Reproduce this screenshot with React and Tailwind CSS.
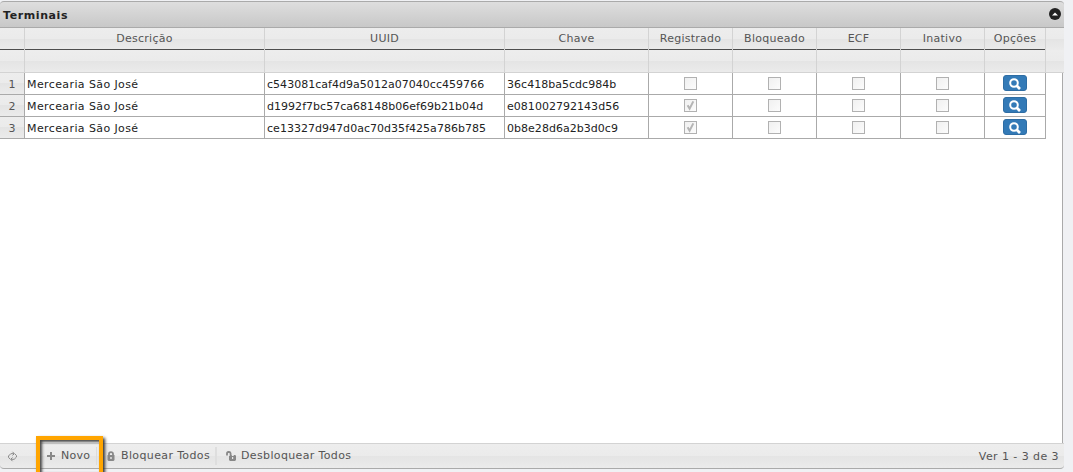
const columns = [
  { label: '', cls: 'w-[25px]' },
  { label: 'Descrição', cls: 'w-[240px]' },
  { label: 'UUID', cls: 'w-[240px]' },
  { label: 'Chave', cls: 'w-[144px]' },
  { label: 'Registrado', cls: 'w-[84px]' },
  { label: 'Bloqueado', cls: 'w-[84px]' },
  { label: 'ECF', cls: 'w-[84px]' },
  { label: 'Inativo', cls: 'w-[84px]' },
  { label: 'Opções', cls: 'w-[61px]' },
];

const rows = [
  { name: 'Mercearia São José', uuid: 'c543081caf4d9a5012a07040cc459766', key: '36c418ba5cdc984b', flags: [false, false, false, false] },
  { name: 'Mercearia São José', uuid: 'd1992f7bc57ca68148b06ef69b21b04d', key: 'e081002792143d56', flags: [true, false, false, false] },
  { name: 'Mercearia São José', uuid: 'ce13327d947d0ac70d35f425a786b785', key: '0b8e28d6a2b3d0c9', flags: [true, false, false, false] },
];

const shade = 'bg-[linear-gradient(#ededed_0%,#ebebeb_49%,#e4e4e4_50%,#ebebeb_100%)]';

function Check({ checked }) {
  return (
    <span className="flex size-[13px] items-center justify-center border border-[#b1b1b1] bg-[linear-gradient(135deg,#f0f0f0,#fcfcfc)]">
      {checked && (
        <svg width="11" height="11" viewBox="0 0 11 11" fill="none" stroke="#b4b4b4" strokeWidth="2">
          <path d="M2.600 5.200 4.600 8.700 8.300 1.400" />
        </svg>
      )}
    </span>
  );
}

function SearchButton() {
  return (
    <span className="mb-[1px] flex h-4 w-6 items-center justify-center rounded-[3px] border border-[#2e6da4] bg-[#337ab7]">
      <svg width="12" height="12" viewBox="0 0 12 12" fill="none" stroke="#fff" className="mt-[2px]">
        <circle cx="5" cy="5" r="3.8" strokeWidth="2" />
        <path d="m7.800 7.800 3.200 3.200" strokeWidth="2.700" />
      </svg>
    </span>
  );
}

function Lock({ open }) {
  return open ? (
    <svg width="12" height="10" viewBox="0 0 12 10" className="shrink-0">
      <path d="M1 4.500V2.600Q1 1 2.400 1h.8Q4.600 1 4.600 2.600V5" fill="none" stroke="#888" strokeWidth="1.800" />
      <path d="M3 5h1.300V4h1.400v1h2V4h1.600l.7 1v4l-1 1H4L3 9Z" fill="#888" />
      <path d="M6 6h1.200v2H6z" fill="#e8e8e8" />
    </svg>
  ) : (
    <svg width="8" height="10" viewBox="0 0 8 10" className="shrink-0">
      <path d="M2 5V3Q2 1.200 4 1.200T6 3v2" fill="none" stroke="#888" strokeWidth="1.800" />
      <path d="M.5 4h7v5l-1 1h-5l-1-1Z" fill="#888" />
      <path d="M3.300 6h1.400v2H3.300z" fill="#e8e8e8" />
    </svg>
  );
}

function Cell({ cls, className = '', children }) {
  return <div className={`flex shrink-0 items-center border-r border-[#aaa] ${cls} ${className}`}>{children}</div>;
}

export default function App() {
  return (
    <div className="flex h-[472px] w-[1073px] flex-col overflow-hidden bg-[#f0f1f4] pt-px font-['Verdana','DejaVu_Sans',sans-serif] text-[11px] leading-[14px] text-[#555]">
      <div className="flex h-[468px] w-[1064px] flex-col">
        <header className="flex h-[27px] shrink-0 items-center justify-between rounded-t-[4px] border-y border-[#aaa] bg-[linear-gradient(#dedede,#c8c8c8)] pr-[3px] pl-[3px] font-bold text-[#222]">
          <span className="pt-[2px] tracking-[0.6px]">Terminais</span>
          <svg width="12" height="12" viewBox="0 0 12 12" className="mb-px">
            <circle cx="6" cy="6" r="6" fill="#222" />
            <path d="m3 7.500 3-3 3 3Z" fill="#fff" />
          </svg>
        </header>

        <div className={`flex h-[22px] shrink-0 tracking-[0.25px] ${shade}`}>
          {columns.map((c, i) => (
            <div key={i} className={`flex shrink-0 flex-col border-r border-[#d3d3d3] ${c.cls}`}>
              <div className="flex h-[21px] items-center justify-center">{c.label}</div>
              <div className="h-px bg-[#4d4d4d]" />
            </div>
          ))}
        </div>
        <div className={`flex h-[23px] shrink-0 border-b border-[#d3d3d3] ${shade}`}>
          {columns.map((c, i) => (
            <div key={i} className={`shrink-0 border-r border-[#d3d3d3] ${c.cls}`} />
          ))}
        </div>

        <main className="w-[1063px] grow border-r border-[#aaa] bg-white text-[#222]">
          {rows.map((r, i) => (
            <div key={i} className="flex h-[22px] w-[1046px] border-b border-[#aaa]">
              <Cell cls="w-[25px]" className={`justify-center pt-[2px] text-[#555] ${shade}`}>{i + 1}</Cell>
              <Cell cls="w-[240px]" className="pt-[2px] pl-[2px] tracking-[0.4px]">{r.name}</Cell>
              <Cell cls="w-[240px]" className="pt-[2px] pl-[2px] tracking-[0.03px]">{r.uuid}</Cell>
              <Cell cls="w-[144px]" className="pt-[2px] pl-[2px] tracking-[0.03px]">{r.key}</Cell>
              {r.flags.map((f, j) => (
                <Cell key={j} cls="w-[84px]" className="justify-center"><Check checked={f} /></Cell>
              ))}
              <Cell cls="w-[61px]" className="justify-center"><SearchButton /></Cell>
            </div>
          ))}
        </main>

        <footer className={`relative flex h-[26px] shrink-0 items-center rounded-b-[4px] border-t border-b border-t-[#d3d3d3] border-b-[#aaa] ${shade}`}>
          <svg width="11" height="11" viewBox="0 0 11 11" className="mt-px ml-[7px] shrink-0" fill="none" stroke="#888" strokeWidth="1">
            <path d="M3 8 1.500 6.300V5l2.300-2.300H7M8 3l1.500 1.700V6L7.200 8.300H4" />
            <path d="M5.500.8 7.300 2.700 5.500 4.500M5.500 6.500 3.700 8.300l1.800 1.900" />
          </svg>
          <svg width="8" height="8" viewBox="0 0 8 8" className="ml-[29px] shrink-0" stroke="#888" strokeWidth="2">
            <path d="M4 0v8M0 4h8" />
          </svg>
          <span className="ml-[6px] w-[35px] tracking-[0.3px]">Novo</span>
          <span className="h-[18px] w-px bg-[#dcdcdc]" />
          <span className="ml-[10px] flex"><Lock /></span>
          <span className="ml-[6px] w-[94px] whitespace-nowrap tracking-[0.37px]">Bloquear Todos</span>
          <span className="h-[18px] w-[2px] bg-[#dedede]" />
          <span className="ml-[9px] flex"><Lock open /></span>
          <span className="ml-[3px] whitespace-nowrap tracking-[0.36px]">Desbloquear Todos</span>
          <span className="mt-px mr-[5px] ml-auto tracking-[0.43px]">Ver 1 - 3 de 3</span>
          <span className="absolute top-[-8px] left-[36px] h-[40px] w-[67px] border-4 border-[#ffa500] shadow-[2px_2px_3px_#333,inset_2px_2px_3px_#444]" />
        </footer>
      </div>
    </div>
  );
}
